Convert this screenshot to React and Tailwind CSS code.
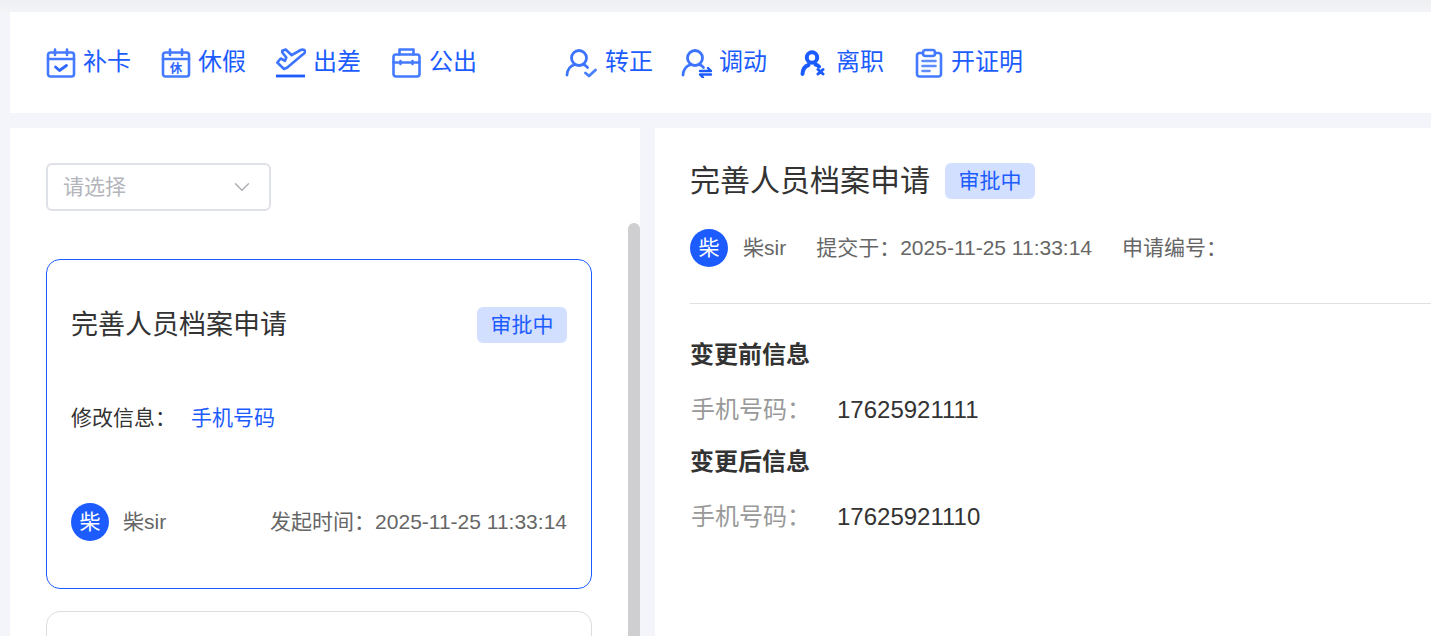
import React from 'react';
import { ChevronDown } from 'lucide-react';

const BLUE = '#1c5cff';

// Toolbar icons, drawn on a 30x30 box
const CalendarBase = ({ children }) => (
  <svg width="30" height="30" viewBox="0 0 30 30" fill="none" stroke="#447aff" strokeWidth="2.6" strokeLinecap="round" strokeLinejoin="round">
    <rect x="2" y="4.500" width="26" height="24" rx="2.500" />
    <path d="M2 11h26M9 1.500V7M21 1.500V7" />
    {children}
  </svg>
);

const CheckCalendar = () => (
  <CalendarBase>
    <path d="M9.500 19l4 3.500 7-5" stroke="#2f68ff" strokeWidth="2.800" />
  </CalendarBase>
);

const LeaveCalendar = () => (
  <CalendarBase>
    <text x="15" y="25" textAnchor="middle" fontSize="12.500" fontWeight="700" fill="#2f68ff" stroke="none">休</text>
  </CalendarBase>
);

const Plane = () => (
  <svg width="30" height="30" viewBox="0 0 30 30" fill="none" stroke="#3d74ff" strokeWidth="2.600" strokeLinecap="round" strokeLinejoin="round">
    <path d="M6.300 2.800L9.700 1.500l6 5.700 9-5.200c2-.8 4-.2 4.300 1 .2 1.300-.5 2.400-2 3.300L11.300 19.500 8 21l-6.700-6.500 3.400-4 4.300 2.300 1.300-3.300-4-5z" />
    <path d="M0 28h29" stroke={BLUE} strokeWidth="2.800" strokeLinecap="butt" />
  </svg>
);

const Briefcase = () => (
  <svg width="30" height="30" viewBox="0 0 30 30" fill="none" stroke="#447aff" strokeWidth="2.600" strokeLinecap="round" strokeLinejoin="round">
    <rect x="2.500" y="6.500" width="26" height="22" rx="2.500" />
    <path d="M8.500 6.500V1.500h14v5M2.500 14.500h26M9.500 13v3M21.500 13v3" />
  </svg>
);

const UserBase = ({ children }) => (
  <svg width="32" height="30" viewBox="0 0 32 30" fill="none" stroke="#3d74ff" strokeWidth="2.800" strokeLinecap="round" strokeLinejoin="round">
    <circle cx="14" cy="10" r="7.500" />
    <path d="M2 27c.5-6 4-9.500 8-10.500M18 16.500c2 .5 3.500 1.500 4.500 3" />
    {children}
  </svg>
);

const UserCheck = () => (
  <UserBase>
    <path d="M20.500 25l3.500 3 6.500-6" stroke="#4d80ff" />
  </UserBase>
);

const UserSwap = () => (
  <UserBase>
    <path d="M19 23h11l-3-3M30 26.500H19l3 3" stroke={BLUE} strokeWidth="2.400" />
  </UserBase>
);

const UserCross = () => (
  <svg width="26" height="26" viewBox="0 0 26 26" fill="none" stroke={BLUE} strokeWidth="4" strokeLinecap="round" strokeLinejoin="round">
    <circle cx="12" cy="7.500" r="5.200" />
    <path d="M2.500 24c.3-5 3-8 6-9M15.500 14.500c1.500.4 2.800 1.200 3.500 2.200" />
    <path d="M18 19.500l5 4.500M23 19.500l-5 4.500" strokeWidth="3" />
  </svg>
);

const Clipboard = () => (
  <svg width="30" height="30" viewBox="0 0 30 30" fill="none" stroke="#447aff" strokeWidth="2.600" strokeLinecap="round" strokeLinejoin="round">
    <path d="M9 5H5.500A2.500 2.500 0 0 0 3 7.500V26a2.500 2.500 0 0 0 2.500 2.500h19A2.500 2.500 0 0 0 27 26V7.500A2.500 2.500 0 0 0 24.500 5H21" />
    <rect x="9" y="2" width="12" height="6" rx="2.500" />
    <path d="M8.500 13h13M8.500 18h13M8.500 23h7" stroke="#5f8cff" />
  </svg>
);

const ToolItem = ({ icon, label, className }) => (
  <div className={`flex items-center text-[24px] leading-[32px] text-[#1c5cff] ${className}`}>
    {icon}
    <span className="pb-[2px]">{label}</span>
  </div>
);

const Avatar = () => (
  <div className="w-[38px] h-[38px] rounded-full bg-[#1c5cff] text-white text-[21px] flex items-center justify-center shrink-0">柴</div>
);

const Badge = () => (
  <span className="inline-flex items-center justify-center w-[90px] h-[36px] rounded-[6px] bg-[#d2dfff] text-[#1c5cff] text-[21px] shrink-0">审批中</span>
);

const InfoRow = ({ value }) => (
  <div className="flex items-center h-[32px] mt-[23px]">
    <span className="w-[147px] text-[24px] text-[#999999] pl-[1px]">手机号码：</span>
    <span className="text-[24px] text-[#333333]">{value}</span>
  </div>
);

export default function App() {
  return (
    <div className="w-[1431px] h-[636px] overflow-hidden bg-[#f4f5fa] font-['Liberation_Sans','Noto_Sans_CJK_SC',sans-serif]">
      {/* thin grey strip above the toolbar */}
      <div className="h-[12px] bg-gradient-to-b from-[#eeeff1] to-[#f3f4f7]" />

      {/* Toolbar */}
      <div className="ml-[10px] h-[101px] bg-white flex items-center pl-[36px]">
        <ToolItem icon={<span className="mr-[7px] flex"><CheckCalendar /></span>} label="补卡" className="w-[115px]" />
        <ToolItem icon={<span className="mr-[7px] flex"><LeaveCalendar /></span>} label="休假" className="w-[115px]" />
        <ToolItem icon={<span className="mr-[7px] flex"><Plane /></span>} label="出差" className="w-[115px]" />
        <ToolItem icon={<span className="mr-[8px] flex"><Briefcase /></span>} label="公出" className="w-[174px]" />
        <ToolItem icon={<span className="mr-[8px] flex"><UserCheck /></span>} label="转正" className="w-[116px]" />
        <ToolItem icon={<span className="mr-[6px] flex"><UserSwap /></span>} label="调动" className="w-[119px]" />
        <ToolItem icon={<span className="mr-[10px] flex"><UserCross /></span>} label="离职" className="w-[114px]" />
        <ToolItem icon={<span className="mr-[7px] flex"><Clipboard /></span>} label="开证明" />
      </div>

      <div className="flex ml-[10px] mt-[15px] h-[508px] gap-[15px]">
        {/* Left list */}
        <div className="w-[630px] bg-white flex shrink-0 overflow-hidden">
          <div className="w-[618px] pl-[36px] pt-[35px] shrink-0">
            <div className="w-[225px] h-[48px] border-2 border-[#dfe1e8] rounded-[6px] flex items-center justify-between pl-[15px] pr-[14px] text-[21px] text-[#b3b5bb]">
              <span>请选择</span>
              <ChevronDown size={26} strokeWidth={1.200} color="#a8aab0" />
            </div>

            <div className="w-[546px] h-[330px] mt-[48px] border border-[#1c5cff] rounded-[14px] px-[24px] flex flex-col">
              <div className="flex items-center justify-between mt-[47px]">
                <span className="text-[27px] text-[#333333] leading-[36px]">完善人员档案申请</span>
                <Badge />
              </div>
              <div className="flex items-center mt-[60px] text-[21px] leading-[30px]">
                <span className="w-[120px] text-[#333333]">修改信息：</span>
                <span className="text-[#1c5cff]">手机号码</span>
              </div>
              <div className="flex items-center mt-[70px]">
                <Avatar />
                <span className="ml-[14px] text-[21px] text-[#666666]">柴sir</span>
                <span className="ml-auto text-[21px] text-[#666666]">发起时间：2025-11-25 11:33:14</span>
              </div>
            </div>

            <div className="w-[546px] h-[200px] mt-[22px] border border-[#dddddd] rounded-[14px]" />
          </div>
          {/* scrollbar */}
          <div className="w-[12px] h-[500px] mt-[95px] bg-[#cfcfd1] rounded-t-[6px]" />
        </div>

        {/* Right detail */}
        <div className="flex-1 bg-white pl-[35px] pt-[35px]">
          <div className="flex items-center">
            <span className="text-[30px] leading-[36px] text-[#333333]">完善人员档案申请</span>
            <span className="ml-[15px]"><Badge /></span>
          </div>
          <div className="flex items-center mt-[30px] text-[21px] text-[#666666]">
            <Avatar />
            <span className="ml-[15px]">柴sir</span>
            <span className="ml-[30px]">提交于：2025-11-25 11:33:14</span>
            <span className="ml-[30px]">申请编号：</span>
          </div>
          <div className="h-px bg-[#e0e0e0] mt-[36px]" />
          <div className="mt-[35px] text-[24px] leading-[32px] font-bold text-[#333333]">变更前信息</div>
          <InfoRow value="17625921111" />
          <div className="mt-[20px] text-[24px] leading-[32px] font-bold text-[#333333]">变更后信息</div>
          <InfoRow value="17625921110" />
        </div>
      </div>
    </div>
  );
}
